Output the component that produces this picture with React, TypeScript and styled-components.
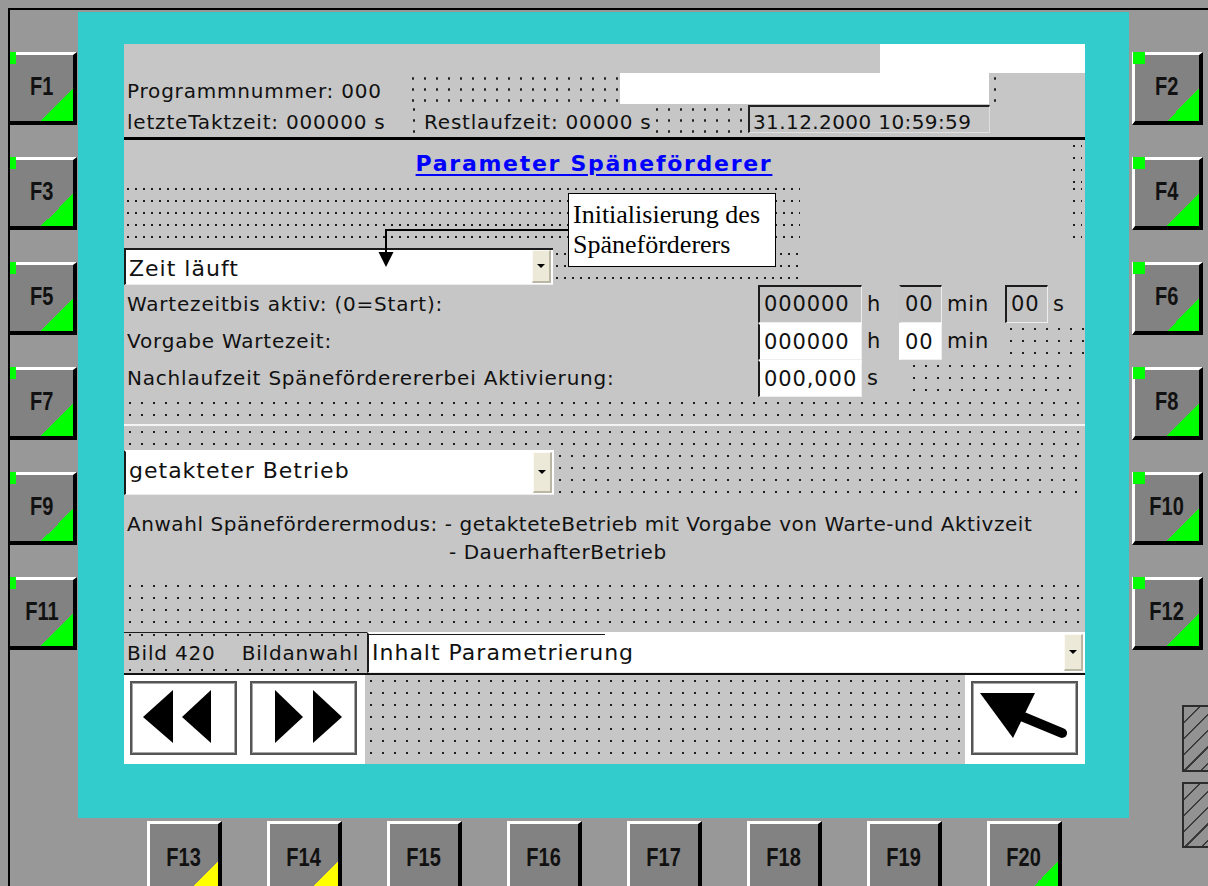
import React from "react";
import styled, { createGlobalStyle } from "styled-components";

const GlobalStyle = createGlobalStyle`
  html, body {
    margin: 0;
    padding: 0;
    background: #989898;
  }
  body {
    width: 1208px;
    height: 886px;
    overflow: hidden;
  }
`;

type KeySide = "left" | "right" | "bottom";
type Corner = "green" | "yellow" | null;

type iFunctionKey = {
  label: string;
  side: KeySide;
  led?: boolean;
  corner?: Corner;
};

const leftKeys: iFunctionKey[] = ["F1", "F3", "F5", "F7", "F9", "F11"].map(label => ({
  label,
  side: "left",
  led: true,
  corner: "green"
}));
const rightKeys: iFunctionKey[] = ["F2", "F4", "F6", "F8", "F10", "F12"].map(label => ({
  label,
  side: "right",
  led: true,
  corner: "green"
}));
const bottomKeys: iFunctionKey[] = [
  { label: "F13", side: "bottom", corner: "yellow" },
  { label: "F14", side: "bottom", corner: "yellow" },
  { label: "F15", side: "bottom" },
  { label: "F16", side: "bottom" },
  { label: "F17", side: "bottom" },
  { label: "F18", side: "bottom" },
  { label: "F19", side: "bottom" },
  { label: "F20", side: "bottom", corner: "green" }
];

const Page = styled.div`
  width: 1208px;
  height: 886px;
  box-sizing: border-box;
  padding: 8px 0 0 8px;
  background: #989898;
  overflow: hidden;
`;

const Housing = styled.div`
  height: 100%;
  box-sizing: border-box;
  border-top: 2px solid #000;
  border-left: 2px solid #000;
  display: grid;
  grid-template-columns: 68px 1051px 1fr;
  grid-template-rows: 808px 1fr;
`;

const KeyColumn = styled.div<{ $side: KeySide }>`
  display: flex;
  flex-direction: column;
  gap: 32px;
  padding-top: 42px;
  padding-left: ${p => (p.$side === "right" ? 3 : 0)}px;
`;

const BottomKeyRow = styled.div`
  grid-column: 1 / -1;
  display: flex;
  gap: 45px;
  padding: 3px 0 0 137px;
`;

const Key = styled.div<{ $side: KeySide }>`
  position: relative;
  flex: none;
  box-sizing: border-box;
  width: ${p => (p.$side === "left" ? 67 : p.$side === "right" ? 71 : 75)}px;
  height: 73px;
  background: #828282;
  border-top: 3px solid #fff;
  border-left: ${p => (p.$side === "left" ? "none" : "3px solid #fff")};
  border-right: 4px solid #000;
  border-bottom: ${p => (p.$side === "bottom" ? "none" : "4px solid #000")};
  display: flex;
  align-items: center;
  justify-content: center;
`;

const KeyLabel = styled.span`
  display: inline-block;
  font-family: "Liberation Sans", Arial, sans-serif;
  font-weight: bold;
  font-size: 25px;
  color: #111;
  transform: scaleX(0.8);
  margin-top: -3px;
`;

const KeyLed = styled.div<{ $side: KeySide }>`
  position: absolute;
  top: -3px;
  left: ${p => (p.$side === "left" ? 0 : -2)}px;
  width: ${p => (p.$side === "left" ? 6 : 12)}px;
  height: 12px;
  background: #00ff00;
`;

const KeyCorner = styled.div<{ $color: string }>`
  position: absolute;
  right: 0;
  bottom: 0;
  width: 32px;
  height: 32px;
  background: linear-gradient(to bottom right, transparent 50%, ${p => p.$color} 50%);
`;

const HatchStack = styled.div`
  flex: none;
  align-self: flex-end;
  margin-top: 23px;
  display: flex;
  flex-direction: column;
  gap: 10px;
`;

const HatchBox = styled.div<{ $h: number }>`
  width: 26px;
  height: ${p => p.$h}px;
  box-sizing: border-box;
  border: 2px solid #2c2c2c;
  border-right: none;
  background: repeating-linear-gradient(135deg, transparent 0 10px, #3a3a3a 10px 11.5px), #929292;
`;

const Bezel = styled.div`
  grid-column: 2;
  grid-row: 1;
  margin-top: 2px;
  background: #33cccc;
  padding: 32px 44px 54px 46px;
`;

const Screen = styled.div`
  width: 961px;
  height: 720px;
  background: #c6c6c6;
  display: flex;
  flex-direction: column;
  font-family: "DejaVu Sans", Verdana, sans-serif;
  font-size: 20px;
  line-height: 23px;
  letter-spacing: 0.8px;
  color: #111;
  white-space: nowrap;
`;

const Dots = styled.div<{ $sx?: number; $sy?: number; $w?: number }>`
  ${p => (p.$w ? `width: ${p.$w}px; flex: none;` : "flex: 1;")}
  align-self: stretch;
  background-image: radial-gradient(circle, #1e1e1e 0 1px, transparent 1.4px);
  background-size: ${p => p.$sx || 12}px ${p => p.$sy || 12}px;
`;

const Band = styled.div<{ $h: number }>`
  height: ${p => p.$h}px;
  display: flex;
  flex: none;
`;

const HeaderRow = styled.div<{ $h: number }>`
  height: ${p => p.$h}px;
  display: flex;
  flex: none;
`;

const HeaderText = styled.div<{ $w: number }>`
  width: ${p => p.$w}px;
  flex: none;
  box-sizing: border-box;
  padding: 7px 0 0 3px;
`;

const WhiteBlock = styled.div<{ $w: number }>`
  width: ${p => p.$w}px;
  flex: none;
  background: #fff;
`;

const Filler = styled.div<{ $w?: number }>`
  ${p => (p.$w ? `width: ${p.$w}px; flex: none;` : "flex: 1;")}
`;

const DateBox = styled.div`
  width: 242px;
  flex: none;
  box-sizing: border-box;
  margin: 1px 0 4px;
  padding: 4px 0 0 3px;
  border-top: 2px solid #222;
  border-left: 2px solid #222;
  border-right: 1px solid #e0e0e0;
  border-bottom: 1px solid #e0e0e0;
  letter-spacing: 0.4px;
`;

const HeavyRule = styled.div`
  height: 3px;
  flex: none;
  background: #000;
`;

const TitleRow = styled.div`
  height: 43px;
  flex: none;
  display: flex;
`;

const Title = styled.div`
  flex: 1;
  text-align: center;
  padding: 11px 6px 0 0;
  font-weight: bold;
  font-size: 22px;
  line-height: 26px;
  letter-spacing: 1.7px;
  color: #0000ff;
  text-decoration: underline;
  text-decoration-thickness: 2px;
  text-underline-offset: 3px;
`;

const ParamSection = styled.div`
  position: relative;
  display: flex;
  flex-direction: column;
`;

const Callout = styled.div`
  position: absolute;
  left: 444px;
  top: 10px;
  width: 208px;
  height: 74px;
  box-sizing: border-box;
  background: #fff;
  border: 1px solid #000;
  padding: 6px 0 0 4px;
  font-family: "Liberation Serif", "Times New Roman", serif;
  font-size: 26px;
  line-height: 30px;
  letter-spacing: 0;
  color: #000;
`;

const CalloutArrow = styled.svg`
  position: absolute;
  left: 252px;
  top: 42px;
`;

const Combo = styled.div<{ $w?: number; $h: number; $top?: boolean }>`
  ${p => (p.$w ? `width: ${p.$w}px; flex: none;` : "flex: 1;")}
  height: ${p => p.$h}px;
  box-sizing: border-box;
  background: #fff;
  border-top: 2px solid ${p => (p.$top ? "#1c1c1c" : "transparent")};
  border-left: 2px solid #1c1c1c;
  border-bottom: 1px solid #ececec;
  display: flex;
  align-items: flex-start;
`;

const ComboText = styled.div`
  flex: 1;
  padding: 6px 0 0 3px;
  font-size: 22px;
  line-height: 26px;
  letter-spacing: 1px;
`;

const ComboButton = styled.div`
  width: 19px;
  align-self: stretch;
  margin: 0 2px 1px 0;
  box-sizing: border-box;
  background: #ece9d8;
  border-top: 1px solid #fbfaf4;
  border-left: 1px solid #fbfaf4;
  border-right: 2px solid #b9b6a4;
  border-bottom: 2px solid #b9b6a4;
  display: flex;
  align-items: center;
  justify-content: center;

  &::after {
    content: "";
    border-left: 4px solid transparent;
    border-right: 4px solid transparent;
    border-top: 4px solid #000;
  }
`;

const ComboRow = styled.div<{ $h: number }>`
  height: ${p => p.$h}px;
  display: flex;
  flex: none;
`;

const FieldRow = styled.div<{ $h: number }>`
  height: ${p => p.$h}px;
  display: flex;
  flex: none;
  align-items: center;
`;

const FieldLabel = styled.div`
  width: 631px;
  flex: none;
  padding-left: 3px;
`;

const Field = styled.div<{ $w: number; $white?: boolean; $top?: boolean; $left?: boolean }>`
  width: ${p => p.$w}px;
  flex: none;
  align-self: stretch;
  box-sizing: border-box;
  display: flex;
  align-items: center;
  padding-left: 4px;
  font-size: 21px;
  letter-spacing: 0.9px;
  background: ${p => (p.$white ? "#fff" : "#c4c4c4")};
  border-top: 2px solid ${p => (p.$top ? "#1c1c1c" : "transparent")};
  border-left: 2px solid ${p => (p.$left ? "#1c1c1c" : "transparent")};
  border-right: 1px solid #eeeeee;
  border-bottom: 1px solid #eeeeee;
`;

const Unit = styled.div<{ $w?: number }>`
  ${p => (p.$w ? `width: ${p.$w}px; flex: none;` : "")}
  padding-left: 5px;
  box-sizing: border-box;
  font-size: 21px;
`;

const Separator = styled.div`
  height: 2px;
  flex: none;
  background: #f4f4f4;
`;

const InfoBlock = styled.div`
  height: 85px;
  flex: none;
  box-sizing: border-box;
  padding: 15px 0 0 3px;
  line-height: 28px;
  letter-spacing: 0.55px;
`;

const InfoIndent = styled.div`
  padding-left: 322px;
`;

const NavBar = styled.div`
  height: 41px;
  flex: none;
  display: flex;
`;

const ScreenInfo = styled.div`
  width: 243px;
  flex: none;
  box-sizing: border-box;
  display: flex;
  justify-content: space-between;
  padding: 9px 8px 0 3px;
  border-top: 1px solid #1c1c1c;
  background-image: radial-gradient(circle at 6px 2px, #1e1e1e 0 1px, transparent 1.4px);
  background-size: 12px 35px;
`;

const ScreenCombo = styled(Combo)`
  background: linear-gradient(#1c1c1c, #1c1c1c) no-repeat 0 0 / 236px 1px, #fff;
`;

const BottomRule = styled.div`
  height: 2px;
  flex: none;
  background: #111;
`;

const ButtonRow = styled.div`
  height: 89px;
  flex: none;
  display: flex;
`;

const ButtonPanel = styled.div<{ $w: number }>`
  width: ${p => p.$w}px;
  flex: none;
  box-sizing: border-box;
  background: #fff;
  display: flex;
  gap: 13px;
  padding: 6px 0 0 6px;
`;

const PanelButton = styled.div`
  width: 107px;
  height: 74px;
  box-sizing: border-box;
  background: #fff;
  border: 2px solid #555;
  box-shadow: inset 0 0 0 1px #a8a8a8;
  display: flex;
`;

const FunctionKey = ({ label, side, led, corner }: iFunctionKey) => {
  return (
    <Key $side={side}>
      {led ? <KeyLed $side={side} /> : null}
      <KeyLabel>{label}</KeyLabel>
      {corner ? <KeyCorner $color={corner === "green" ? "#00ff00" : "#ffff00"} /> : null}
    </Key>
  );
};

const PrevIcon = () => (
  <svg width="103" height="70" viewBox="0 0 103 70">
    <polygon points="11,34 41,7 41,60" fill="#000" />
    <polygon points="50,34 79,7 79,60" fill="#000" />
  </svg>
);

const NextIcon = () => (
  <svg width="103" height="70" viewBox="0 0 103 70">
    <polygon points="23,7 51,34 23,60" fill="#000" />
    <polygon points="61,7 90,34 61,60" fill="#000" />
  </svg>
);

const BackIcon = () => (
  <svg width="103" height="70" viewBox="0 0 103 70">
    <polygon points="7,10 62,10 40,55" fill="#000" />
    <line x1="36" y1="28" x2="89" y2="50" stroke="#000" strokeWidth="10" strokeLinecap="round" />
  </svg>
);

const ParameterScreen = () => {
  return (
    <Screen>
      <HeaderRow $h={29}>
        <Filler />
        <WhiteBlock $w={205} />
      </HeaderRow>
      <HeaderRow $h={31}>
        <HeaderText $w={283}>Programmnummer: 000</HeaderText>
        <Dots $w={213} $sy={11} />
        <WhiteBlock $w={369} />
        <Dots $w={8} $sy={11} />
        <Filler />
      </HeaderRow>
      <HeaderRow $h={33}>
        <HeaderText $w={283}>letzteTaktzeit: 000000 s</HeaderText>
        <Dots $w={14} $sx={14} $sy={11} />
        <HeaderText $w={230}>Restlaufzeit: 00000 s</HeaderText>
        <Dots $w={97} $sy={11} />
        <DateBox>31.12.2000 10:59:59</DateBox>
        <Filler />
      </HeaderRow>
      <HeavyRule />

      <TitleRow>
        <Title>Parameter Späneförderer</Title>
        <Dots $w={12} $sx={8} />
        <Filler $w={3} />
      </TitleRow>

      <ParamSection>
        <Band $h={65}>
          <Dots $w={676} $sx={8} />
          <Filler />
          <Dots $w={12} $sx={8} />
          <Filler $w={3} />
        </Band>
        <ComboRow $h={37}>
          <Combo $w={429} $h={37} $top>
            <ComboText>Zeit läuft</ComboText>
            <ComboButton />
          </Combo>
          <Dots $w={247} $sx={8} />
          <Filler />
        </ComboRow>
        <Callout>
          Initialisierung des
          <br />
          Späneförderers
        </Callout>
        <CalloutArrow width="194" height="45" viewBox="0 0 194 45">
          <polyline points="193,5 10,5 10,30" fill="none" stroke="#000" strokeWidth="2" />
          <polygon points="2.5,27 17.5,27 10,42" fill="#000" />
        </CalloutArrow>
      </ParamSection>

      <FieldRow $h={38}>
        <FieldLabel>Wartezeitbis aktiv: (0=Start):</FieldLabel>
        <Field $w={104} $top $left>000000</Field>
        <Unit $w={37}>h</Unit>
        <Field $w={43} $top>00</Field>
        <Unit $w={63}>min</Unit>
        <Field $w={43} $top $left>00</Field>
        <Unit>s</Unit>
        <Filler />
      </FieldRow>
      <FieldRow $h={37}>
        <FieldLabel>Vorgabe Wartezeit:</FieldLabel>
        <Field $w={104} $white $left>000000</Field>
        <Unit $w={37}>h</Unit>
        <Field $w={43} $white>00</Field>
        <Unit $w={63}>min</Unit>
        <Dots $w={80} />
        <Filler />
      </FieldRow>
      <FieldRow $h={37}>
        <FieldLabel>Nachlaufzeit Späneförderererbei Aktivierung:</FieldLabel>
        <Field $w={104} $white $left>000,000</Field>
        <Unit $w={46}>s</Unit>
        <Dots $w={172} />
        <Filler />
      </FieldRow>

      <Band $h={27}>
        <Dots />
      </Band>
      <Separator />
      <Band $h={24}>
        <Dots />
      </Band>

      <ComboRow $h={45}>
        <Combo $w={430} $h={45}>
          <ComboText>getakteter Betrieb</ComboText>
          <ComboButton />
        </Combo>
        <Dots />
      </ComboRow>

      <InfoBlock>
        <div>Anwahl Späneförderermodus: - getakteteBetrieb mit Vorgabe von Warte-und Aktivzeit</div>
        <InfoIndent>- DauerhafterBetrieb</InfoIndent>
      </InfoBlock>

      <Band $h={52}>
        <Dots />
      </Band>

      <NavBar>
        <ScreenInfo>
          <span>Bild 420</span>
          <span>Bildanwahl</span>
        </ScreenInfo>
        <ScreenCombo $h={41}>
          <ComboText>Inhalt Parametrierung</ComboText>
          <ComboButton />
        </ScreenCombo>
      </NavBar>
      <BottomRule />

      <ButtonRow>
        <ButtonPanel $w={241}>
          <PanelButton>
            <PrevIcon />
          </PanelButton>
          <PanelButton>
            <NextIcon />
          </PanelButton>
        </ButtonPanel>
        <Dots />
        <ButtonPanel $w={120}>
          <PanelButton>
            <BackIcon />
          </PanelButton>
        </ButtonPanel>
      </ButtonRow>
    </Screen>
  );
};

const App = () => {
  return (
    <>
      <GlobalStyle />
      <Page>
        <Housing>
          <KeyColumn $side="left">
            {leftKeys.map(key => (
              <FunctionKey key={key.label} {...key} />
            ))}
          </KeyColumn>
          <Bezel>
            <ParameterScreen />
          </Bezel>
          <KeyColumn $side="right">
            {rightKeys.map(key => (
              <FunctionKey key={key.label} {...key} />
            ))}
            <HatchStack>
              <HatchBox $h={67} />
              <HatchBox $h={66} />
            </HatchStack>
          </KeyColumn>
          <BottomKeyRow>
            {bottomKeys.map(key => (
              <FunctionKey key={key.label} {...key} />
            ))}
          </BottomKeyRow>
        </Housing>
      </Page>
    </>
  );
};

export default App;
